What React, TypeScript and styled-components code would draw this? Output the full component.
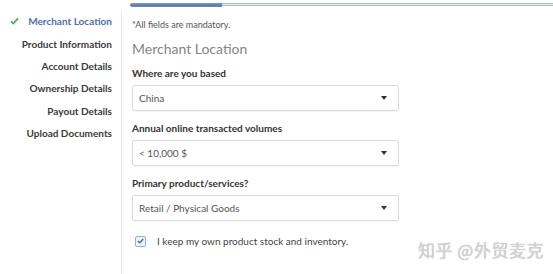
import React from 'react';
import styled, { createGlobalStyle } from 'styled-components';

const GlobalStyle = createGlobalStyle`
  html, body {
    margin: 0;
    padding: 0;
    background: #ffffff;
  }
  body {
    font-family: Lato, "Open Sans", "Liberation Sans", sans-serif;
    color: #333;
  }
`;

const Page = styled.div`
  position: relative;
  width: 553px;
  height: 274px;
  overflow: hidden;
  display: flex;
`;

const Sidebar = styled.nav`
  width: 112px;
  padding-top: 10px;
  padding-right: 9px;
  display: flex;
  flex-direction: column;
  align-items: flex-end;
`;

const NavItem = styled.div<{ active?: boolean }>`
  display: flex;
  align-items: center;
  gap: 9px;
  height: 22.4px;
  font-size: 10px;
  font-weight: 700;
  color: ${(p) => (p.active ? '#4d72a6' : '#3a3a3a')};
  white-space: nowrap;
`;

const Check = styled.svg`
  width: 9px;
  height: 8px;
`;

const Main = styled.main`
  flex: 1;
  display: flex;
  flex-direction: column;
`;

const Progress = styled.div`
  display: flex;
  align-items: center;
  margin: 2px 0 0 9px;
  height: 5px;
`;

const ProgressFill = styled.div`
  width: 92px;
  height: 4px;
  background: linear-gradient(#7f9cc0, #5b7ea9 60%, #6d8cb3);
  border-radius: 2px 0 0 2px;
`;

const ProgressTrack = styled.div`
  flex: 1;
  height: 1px;
  border-top: 1px solid #aebcc4;
  border-bottom: 1px solid #aebcc4;
  background: #e4eaee;
`;

const Body = styled.section`
  flex: 1;
  margin-top: 5px;
  border-left: 1px solid #e8e8e8;
  padding: 7px 0 0 10px;
`;

const Note = styled.p`
  margin: 0;
  font-size: 9px;
  line-height: 12px;
  color: #555;
`;

const Heading = styled.h2`
  margin: 9px 0 0;
  font-size: 14px;
  line-height: 18px;
  font-weight: 400;
  color: #858585;
`;

const Field = styled.div`
  margin-top: 9px;
  & + & {
    margin-top: 11px;
  }
`;

const Label = styled.div`
  font-size: 10px;
  line-height: 12px;
  font-weight: 700;
  color: #333;
`;

const Select = styled.div`
  margin-top: 6px;
  width: 267px;
  height: 26px;
  box-sizing: border-box;
  border: 1px solid #dcdcdc;
  border-radius: 2px;
  box-shadow: 0 1px 1px rgba(0, 0, 0, 0.04);
  display: flex;
  align-items: center;
  justify-content: space-between;
  padding: 0 11px 0 6px;
  font-size: 10px;
  color: #555;
`;

const Caret = styled.span`
  width: 0;
  height: 0;
  border-left: 3px solid transparent;
  border-right: 3px solid transparent;
  border-top: 4px solid #333;
`;

const CheckRow = styled.label`
  margin-top: 13px;
  display: flex;
  align-items: center;
  gap: 11px;
  height: 14px;
  padding-left: 3px;
  font-size: 10px;
  color: #444;
`;

const Box = styled.span`
  width: 11px;
  height: 11px;
  box-sizing: border-box;
  border: 1px solid #8fb0d4;
  border-radius: 2px;
  background: #eef4fb;
  display: flex;
  align-items: center;
  justify-content: center;
`;

const Watermark = styled.div`
  position: absolute;
  left: 418px;
  top: 240px;
  font-family: "Noto Sans CJK SC", sans-serif;
  font-size: 17px;
  line-height: 20px;
  color: #d2d2d2;
  text-shadow: 0 0 1px #b8b8b8;
  letter-spacing: 0.5px;
`;

const steps = [
  'Merchant Location',
  'Product Information',
  'Account Details',
  'Ownership Details',
  'Payout Details',
  'Upload Documents',
];

const fields = [
  { label: 'Where are you based', value: 'China' },
  { label: 'Annual online transacted volumes', value: '< 10,000 $' },
  { label: 'Primary product/services?', value: 'Retail / Physical Goods' },
];

const App = () => {
  return (
    <>
      <GlobalStyle />
      <Page>
        <Sidebar>
          {steps.map((s, i) => (
            <NavItem key={s} active={i === 0}>
              {i === 0 && (
                <Check viewBox="0 0 9 8">
                  <path d="M1 4.3 L3.4 6.5 L8 1.4" fill="none" stroke="#4caf50" strokeWidth="1.8" />
                </Check>
              )}
              {s}
            </NavItem>
          ))}
        </Sidebar>
        <Main>
          <Progress>
            <ProgressFill />
            <ProgressTrack />
          </Progress>
          <Body>
            <Note>*All fields are mandatory.</Note>
            <Heading>Merchant Location</Heading>
            {fields.map((f) => (
              <Field key={f.label}>
                <Label>{f.label}</Label>
                <Select>
                  <span>{f.value}</span>
                  <Caret />
                </Select>
              </Field>
            ))}
            <CheckRow>
              <Box>
                <svg width="7" height="6" viewBox="0 0 7 6">
                  <path d="M0.8 3 L2.8 4.8 L6.2 1" fill="none" stroke="#3b6fb0" strokeWidth="1.4" />
                </svg>
              </Box>
              I keep my own product stock and inventory.
            </CheckRow>
          </Body>
        </Main>
        <Watermark>知乎 @外贸麦克</Watermark>
      </Page>
    </>
  );
};

export default App;
